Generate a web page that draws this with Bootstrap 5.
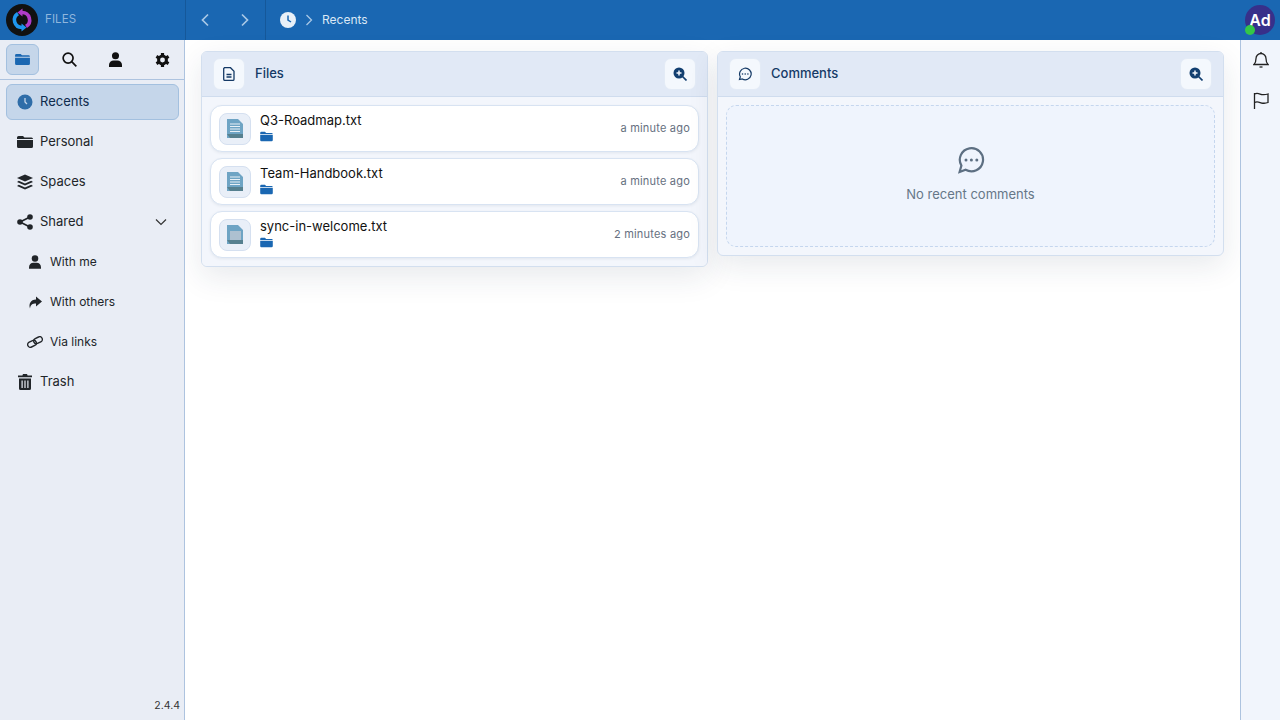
<!doctype html>
<html lang="en"><head><meta charset="utf-8"><title>Files</title>
<link rel="stylesheet" href="https://cdn.jsdelivr.net/npm/bootstrap@5.3.0/dist/css/bootstrap.min.css">
<style>
html,body{height:100%;overflow:hidden}
body{font-family:Inter,"Liberation Sans",sans-serif;font-size:13px;background:#fff;color:#111}
svg{display:block;flex:none}
.topbar{height:40px;background:#1a67b2;color:#fff}
.brand-area{width:186px;border-right:1px solid #15589a;padding-left:6px;gap:7px}
.brand-name{font-size:11.500px;color:#8fb6dd;letter-spacing:.1px}
.logo-disc{width:32px;height:32px;border-radius:50%;background:#111}
.hist-area{width:80px;border-right:1px solid #15589a;height:40px}
.hist-btn{width:40px;height:40px;color:#a9c8e6}
.crumbs{padding-left:14px;font-size:12px;gap:9px;color:#dbe8f5}
.avatar-wrap{width:30px;height:30px;margin-right:5px}
.avatar-disc{width:30px;height:30px;border-radius:50%;background:#37308a;color:#fff;font-weight:600;font-size:16px}
.dot-online{position:absolute;left:0;bottom:0;width:10px;height:10px;border-radius:50%;background:#34c747}
.app-body{height:680px}
.left-side{width:185px;background:#e9edf5;border-right:1px solid #adc3df}
.tab-row{height:40px;border-bottom:1px solid #adc3df;padding:0 0 0 6px;gap:13.500px}
.tab-btn{width:33px;height:31px;border-radius:6px;color:#111;flex:none}
.tab-on{background:#c5d6ea;border:1px solid #a3c0df;color:#1a67b2}
.nav-stack{padding:4px 5px 0 6px}
.side-link{height:36px;margin-bottom:4px;border-radius:6px;padding-left:10px;color:#212529;gap:7px;border:1px solid transparent}
.link-on{background:#c5d6ea;border-color:#a3c0df;color:#0f2c4d;height:36px}
.side-icon{width:16px;display:flex;justify-content:center}
.chev-mark{margin-right:11px}
.side-sub{padding-left:20px;font-size:12px;gap:7px}
.ver{position:absolute;right:4px;bottom:6px;font-size:10.500px;color:#333}
.main-pane{background:#fff;padding:11px 16px 0;display:grid;grid-template-columns:507px 507px;column-gap:9px;align-items:start}
.panel{background:#f3f6fc;border:1px solid #d3dfef;border-radius:6px;box-shadow:0 10px 30px rgba(30,50,80,.1)}
.panel-head{height:45px;background:#e1e9f6;border-bottom:1px solid #cfdcee;padding:0 11px;border-radius:5px 5px 0 0;gap:10px;color:#153a66;font-weight:500;font-size:13px}
.head-icon{width:32px;height:32px;border-radius:7px;background:#f4f8fd;border:1px solid #e3ebf6;color:#153a66}
.file-stack{padding:8px;gap:6px;background:#f3f6fc;border-radius:0 0 5px 5px}
.file-row{height:47px;background:#fff;border:1px solid #d8e3f2;border-radius:12px;padding:0 8px;gap:9px;box-shadow:0 1px 3px rgba(30,50,80,.08)}
.thumb{width:32px;height:32px;border-radius:8px;background:#e9eff8;border:1px solid #d5e0f0}
.file-info{padding-bottom:3px}
.file-name{font-size:13px;line-height:16px;color:#111;margin-bottom:3px}
.file-age{font-size:11px;color:#667080;letter-spacing:.2px}
.empty-box{margin:8px 8px 8px;height:142px;background:#eff4fd;border:1px dashed #c5d6ee;border-radius:10px;color:#667788;gap:11px;font-size:13px;padding-bottom:2px}
.right-side{width:40px;background:#f1f5fc;border-left:1px solid #adc3df}
.right-btn{width:39px;height:40px;color:#222}
</style></head><body>
<div class="topbar d-flex align-items-center">
 <div class="brand-area d-flex align-items-center h-100">
  <div class="logo-disc d-flex align-items-center justify-content-center">
   <svg width="26" height="26" viewBox="0 0 26 26" fill="none"><path d="M13 20.500A7.500 7.500 0 0 1 9 6.600" stroke="#1e96ee" stroke-width="3.600"/><path d="M12.500 16.500l5 4-5 4z" fill="#1e96ee"/><path d="M13 5.500A7.500 7.500 0 0 1 17 19.400" stroke="#b03cc8" stroke-width="3.600"/><path d="M13.500 1.500l-5 4 5 4z" fill="#b03cc8"/></svg>
  </div>
  <span class="brand-name">FILES</span>
 </div>
 <div class="hist-area d-flex">
  <div class="hist-btn d-flex align-items-center justify-content-center"><svg width="10" height="14" viewBox="0 0 10 14" fill="none" stroke="currentColor" stroke-width="1.700"><path d="M7 1.500L1.500 7 7 12.500"/></svg></div>
  <div class="hist-btn d-flex align-items-center justify-content-center"><svg width="10" height="14" viewBox="0 0 10 14" fill="none" stroke="currentColor" stroke-width="1.700"><path d="M2 1.500L7.500 7 2 12.500"/></svg></div>
 </div>
 <div class="crumbs d-flex align-items-center flex-grow-1">
  <svg width="16" height="16" viewBox="0 0 16 16"><circle cx="8" cy="8" r="8" fill="#e8f0f8"/><path d="M8 3.500V8l3 2" fill="none" stroke="#1a67b2" stroke-width="1.500"/></svg>
  <svg class="crumb-sep" width="8" height="12" viewBox="0 0 8 12" fill="none" stroke="#a9c8e6" stroke-width="1.300"><path d="M1.500 1l5 5-5 5"/></svg>
  <span>Recents</span>
 </div>
 <div class="avatar-wrap position-relative">
  <div class="avatar-disc d-flex align-items-center justify-content-center">Ad</div>
  <span class="dot-online"></span>
 </div>
</div>
<div class="app-body d-flex">
 <aside class="left-side position-relative flex-shrink-0">
  <div class="tab-row d-flex align-items-center">
   <div class="tab-btn tab-on d-flex align-items-center justify-content-center"><svg width="15" height="13" viewBox="0 0 16 14" fill="currentColor"><path d="M1.500 1H6l1.500 1.500h7A1.500 1.500 0 0 1 16 4H0V2.500A1.500 1.500 0 0 1 1.500 1zM0 5h16v6.500A1.500 1.500 0 0 1 14.500 13h-13A1.500 1.500 0 0 1 0 11.500z"/></svg></div>
   <div class="tab-btn d-flex align-items-center justify-content-center"><svg width="15" height="15" viewBox="0 0 16 16" fill="none" stroke="currentColor" stroke-width="1.800"><circle cx="6.500" cy="6.500" r="5.300"/><path d="M10.300 10.300L15.300 15.300"/></svg></div>
   <div class="tab-btn d-flex align-items-center justify-content-center"><svg width="13" height="15" viewBox="0 0 14 16" fill="currentColor"><circle cx="7" cy="4" r="3.800"/><path d="M0 16v-2a5 5 0 0 1 5-5h4a5 5 0 0 1 5 5v2z"/></svg></div>
   <div class="tab-btn d-flex align-items-center justify-content-center"><svg width="15" height="16" viewBox="0 0 16 16"><path d="M8 .5v15M1.500 4.200l13 7.600M14.500 4.200l-13 7.600" stroke="currentColor" stroke-width="3.400" stroke-dasharray="3 9"/><circle cx="8" cy="8" r="4.200" fill="none" stroke="currentColor" stroke-width="3.200"/></svg></div>
  </div>
  <nav class="nav-stack">
   <div class="side-link link-on d-flex align-items-center"><span class="side-icon"><svg width="16" height="16" viewBox="0 0 16 16"><circle cx="8" cy="8" r="7.500" fill="#2f6da8"/><path d="M8 4v4l2 2" fill="none" stroke="#c5d6ea" stroke-width="1.300"/></svg></span><span>Recents</span></div>
   <div class="side-link d-flex align-items-center"><span class="side-icon"><svg width="16" height="14" viewBox="0 0 16 14" fill="#212529"><path d="M1.500 1H6l1.500 1.500h7A1.500 1.500 0 0 1 16 4H0V2.500A1.500 1.500 0 0 1 1.500 1zM0 5h16v6.500A1.500 1.500 0 0 1 14.500 13h-13A1.500 1.500 0 0 1 0 11.500z"/></svg></span><span>Personal</span></div>
   <div class="side-link d-flex align-items-center"><span class="side-icon"><svg width="16" height="16" viewBox="0 0 16 16" fill="#212529"><path d="M8 .5l8 3.500-8 3.500L0 4z"/><path d="M1.800 6.800L8 9.500l6.200-2.700L16 8l-8 3.500L0 8z"/><path d="M1.800 10.800L8 13.500l6.200-2.700L16 12l-8 3.500L0 12z"/></svg></span><span>Spaces</span></div>
   <div class="side-link d-flex align-items-center"><span class="side-icon"><svg width="16" height="16" viewBox="0 0 16 16" fill="#212529"><circle cx="13" cy="3" r="2.800"/><circle cx="3" cy="8" r="2.800"/><circle cx="13" cy="13" r="2.800"/><path d="M3 8l10-5M3 8l10 5" stroke="#212529" stroke-width="1.700"/></svg></span><span>Shared</span><svg class="ms-auto chev-mark" width="12" height="8" viewBox="0 0 12 8" fill="none" stroke="#333" stroke-width="1.200"><path d="M1 1.500l5 5 5-5"/></svg></div>
   <div class="side-link side-sub d-flex align-items-center"><span class="side-icon"><svg width="12" height="14" viewBox="0 0 14 16" fill="#212529"><circle cx="7" cy="4" r="3.800"/><path d="M0 16v-2a5 5 0 0 1 5-5h4a5 5 0 0 1 5 5v2z"/></svg></span><span>With me</span></div>
   <div class="side-link side-sub d-flex align-items-center"><span class="side-icon"><svg width="14" height="13" viewBox="0 0 14 12" fill="#212529"><path d="M8 0l6 5-6 5V7C4.500 7 2.500 8 2 12 .5 7.500 2.500 3.200 8 3z"/></svg></span><span>With others</span></div>
   <div class="side-link side-sub d-flex align-items-center"><span class="side-icon"><svg width="16" height="12" viewBox="0 0 16 12" fill="none" stroke="#212529" stroke-width="1.400"><rect x="6.500" y="1.500" width="9" height="5.400" rx="2.700" transform="rotate(-25 11 4.200)"/><rect x=".5" y="5.100" width="9" height="5.400" rx="2.700" transform="rotate(-25 5 7.800)"/></svg></span><span>Via links</span></div>
   <div class="side-link d-flex align-items-center"><span class="side-icon"><svg width="14" height="16" viewBox="0 0 14 16" fill="#212529"><path d="M5 0h4l.6 1.500H14v1.700H0V1.500h4.400z"/><path d="M1 4.500h12V14.500a1.500 1.500 0 0 1-1.500 1.500h-9A1.500 1.500 0 0 1 1 14.500zM3.500 6.500v7.500h1.200V6.500zM6.400 6.500v7.500h1.200V6.500zM9.300 6.500v7.500h1.200V6.500z" fill-rule="evenodd"/></svg></span><span>Trash</span></div>
  </nav>
  <span class="ver">2.4.4</span>
 </aside>
 <main class="main-pane flex-grow-1">
  <section class="panel">
   <div class="panel-head d-flex align-items-center">
    <div class="head-icon d-flex align-items-center justify-content-center"><svg width="12" height="14" viewBox="0 0 12 14" fill="none" stroke="currentColor" stroke-width="1.300"><path d="M1.500.7h6l3.500 3.500v8a1.200 1.200 0 0 1-1.200 1.200H1.700A1.200 1.200 0 0 1 .7 12.200V1.500z"/><path d="M3.500 7.500h5M3.500 10h5"/></svg></div>
    <span class="flex-grow-1">Files</span>
    <div class="head-icon d-flex align-items-center justify-content-center"><svg width="14" height="14" viewBox="0 0 14 14"><circle cx="6" cy="6" r="5.500" fill="#123f70"/><path d="M6 3.500v5M3.500 6h5" stroke="#f4f8fd" stroke-width="1.500"/><path d="M9.500 9.500L13.500 13.500" stroke="#123f70" stroke-width="1.700"/></svg></div>
   </div>
   <div class="file-stack d-flex flex-column">
    <div class="file-row d-flex align-items-center">
     <div class="thumb d-flex align-items-center justify-content-center"><svg width="16" height="19" viewBox="0 0 16 19"><path d="M0 0h11l5 5v14H0z" fill="#6ea4c4"/><path d="M0 15h16v4H3z" fill="#56808f"/><path d="M3 5h10M3 7.500h10M3 10h10M3 12.500h10" stroke="#e8f0f6" stroke-width="1.100"/></svg></div>
     <div class="flex-grow-1 file-info"><div class="file-name">Q3-Roadmap.txt</div><svg width="13" height="11" viewBox="0 0 16 14" fill="#1a67b2"><path d="M1.500 1H6l1.500 1.500h7A1.500 1.500 0 0 1 16 4H0V2.500A1.500 1.500 0 0 1 1.500 1zM0 5h16v6.500A1.500 1.500 0 0 1 14.500 13h-13A1.500 1.500 0 0 1 0 11.500z"/></svg></div>
     <span class="file-age">a minute ago</span>
    </div>
    <div class="file-row d-flex align-items-center">
     <div class="thumb d-flex align-items-center justify-content-center"><svg width="16" height="19" viewBox="0 0 16 19"><path d="M0 0h11l5 5v14H0z" fill="#6ea4c4"/><path d="M0 15h16v4H3z" fill="#56808f"/><path d="M3 5h10M3 7.500h10M3 10h10M3 12.500h10" stroke="#e8f0f6" stroke-width="1.100"/></svg></div>
     <div class="flex-grow-1 file-info"><div class="file-name">Team-Handbook.txt</div><svg width="13" height="11" viewBox="0 0 16 14" fill="#1a67b2"><path d="M1.500 1H6l1.500 1.500h7A1.500 1.500 0 0 1 16 4H0V2.500A1.500 1.500 0 0 1 1.500 1zM0 5h16v6.500A1.500 1.500 0 0 1 14.500 13h-13A1.500 1.500 0 0 1 0 11.500z"/></svg></div>
     <span class="file-age">a minute ago</span>
    </div>
    <div class="file-row d-flex align-items-center">
     <div class="thumb d-flex align-items-center justify-content-center"><svg width="16" height="19" viewBox="0 0 16 19"><path d="M0 0h11l5 5v14H0z" fill="#6ea4c4"/><path d="M0 15h16v4H3z" fill="#56808f"/><path d="M3 6h11v9H3z" fill="#adc0d0"/></svg></div>
     <div class="flex-grow-1 file-info"><div class="file-name">sync-in-welcome.txt</div><svg width="13" height="11" viewBox="0 0 16 14" fill="#1a67b2"><path d="M1.500 1H6l1.500 1.500h7A1.500 1.500 0 0 1 16 4H0V2.500A1.500 1.500 0 0 1 1.500 1zM0 5h16v6.500A1.500 1.500 0 0 1 14.500 13h-13A1.500 1.500 0 0 1 0 11.500z"/></svg></div>
     <span class="file-age">2 minutes ago</span>
    </div>
   </div>
  </section>
  <section class="panel">
   <div class="panel-head d-flex align-items-center">
    <div class="head-icon d-flex align-items-center justify-content-center"><svg width="14" height="14" viewBox="0 0 14 14"><path d="M1.500 12.500l.8-2.700A5.800 5.800 0 1 1 4.300 11.900z" fill="none" stroke="currentColor" stroke-width="1.200"/><circle cx="4.500" cy="7" r=".8" fill="currentColor"/><circle cx="7.200" cy="7" r=".8" fill="currentColor"/><circle cx="9.900" cy="7" r=".8" fill="currentColor"/></svg></div>
    <span class="flex-grow-1">Comments</span>
    <div class="head-icon d-flex align-items-center justify-content-center"><svg width="14" height="14" viewBox="0 0 14 14"><circle cx="6" cy="6" r="5.500" fill="#123f70"/><path d="M6 3.500v5M3.500 6h5" stroke="#f4f8fd" stroke-width="1.500"/><path d="M9.500 9.500L13.500 13.500" stroke="#123f70" stroke-width="1.700"/></svg></div>
   </div>
   <div class="empty-box d-flex flex-column align-items-center justify-content-center">
    <svg width="28" height="28" viewBox="0 0 14 14"><path d="M1.300 13l.9-3.200A5.800 5.800 0 1 1 4.300 11.900z" fill="none" stroke="#5d6f82" stroke-width="1.100"/><circle cx="4.500" cy="7" r=".75" fill="#5d6f82"/><circle cx="7.200" cy="7" r=".75" fill="#5d6f82"/><circle cx="9.900" cy="7" r=".75" fill="#5d6f82"/></svg>
    <span>No recent comments</span>
   </div>
  </section>
 </main>
 <aside class="right-side flex-shrink-0">
  <div class="right-btn d-flex align-items-center justify-content-center"><svg width="16" height="18" viewBox="0 0 16 18" fill="none" stroke="currentColor" stroke-width="1.300"><path d="M1 13.500c1.500-1.500 2-3 2-6a5 5 0 0 1 10 0c0 3 .5 4.500 2 6z"/><path d="M6.500 16h3"/><path d="M8 1v1"/></svg></div>
  <div class="right-btn d-flex align-items-center justify-content-center"><svg width="16" height="17" viewBox="0 0 16 17" fill="none" stroke="currentColor" stroke-width="1.300"><path d="M1.500 1v16"/><path d="M1.500 2c3-1.500 5 0 7 .5 2.500.5 4 .3 6.500-.5v8.500c-2.500 1-4 1-6.500.5-2-.5-4-2-7-.5"/></svg></div>
 </aside>
</div>
<script src="https://cdn.jsdelivr.net/npm/bootstrap@5.3.0/dist/js/bootstrap.bundle.min.js"></script>
</body></html>
